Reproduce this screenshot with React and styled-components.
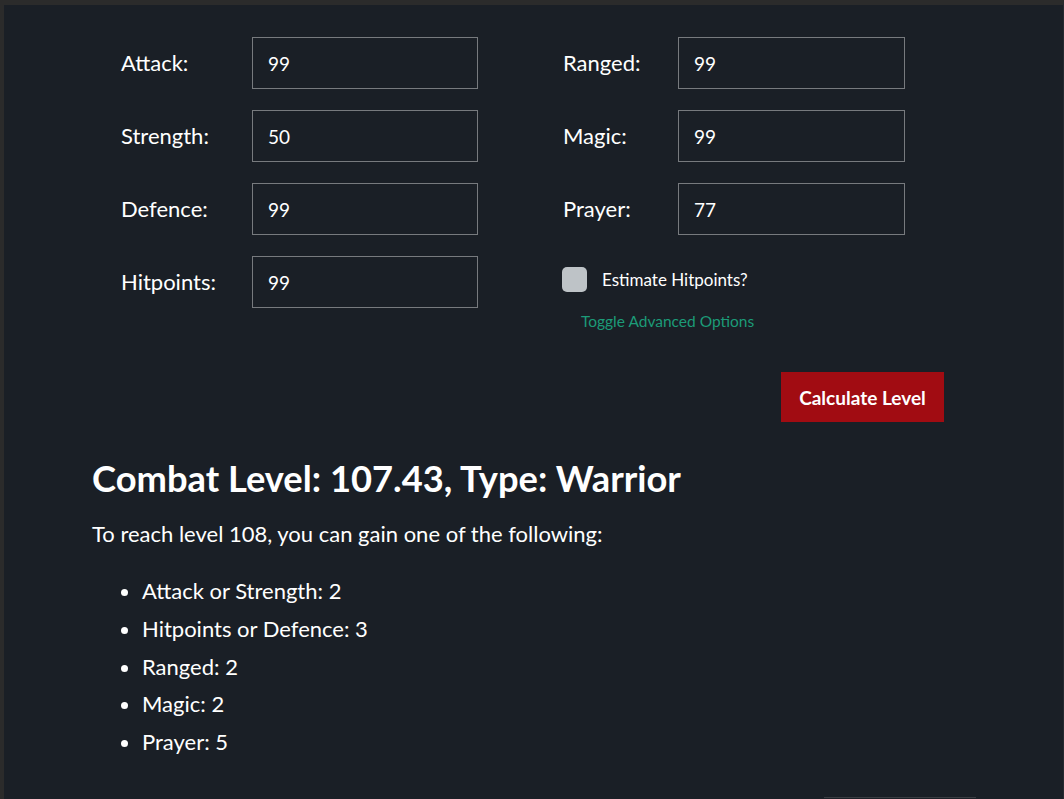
import styled, { createGlobalStyle } from 'styled-components'

const GlobalStyle = createGlobalStyle`
    html, body {
        margin: 0;
        padding: 0;
        background: #1a1f26;
    }
    body {
        font-family: Lato, "Open Sans", sans-serif;
        color: #fff;
    }
`

const leftStats = [
    { label: "Attack:", value: "99" },
    { label: "Strength:", value: "50" },
    { label: "Defence:", value: "99" },
    { label: "Hitpoints:", value: "99" },
]

const rightStats = [
    { label: "Ranged:", value: "99" },
    { label: "Magic:", value: "99" },
    { label: "Prayer:", value: "77" },
]

const gains = [
    "Attack or Strength: 2",
    "Hitpoints or Defence: 3",
    "Ranged: 2",
    "Magic: 2",
    "Prayer: 5",
]

export default function App() {
    return (
        <>
            <GlobalStyle />
            <Frame>
                <Main>
                    <Form onSubmit={(e) => e.preventDefault()}>
                        <Columns>
                            <Column>
                                {leftStats.map((s) => (
                                    <Row key={s.label}>
                                        <Label $width={131}>{s.label}</Label>
                                        <Input defaultValue={s.value} $width={226} />
                                    </Row>
                                ))}
                            </Column>
                            <Column>
                                {rightStats.map((s) => (
                                    <Row key={s.label}>
                                        <Label $width={115}>{s.label}</Label>
                                        <Input defaultValue={s.value} $width={227} />
                                    </Row>
                                ))}
                                <CheckRow>
                                    <Check type="checkbox" />
                                    <CheckText>Estimate Hitpoints?</CheckText>
                                </CheckRow>
                                <Toggle>Toggle Advanced Options</Toggle>
                            </Column>
                        </Columns>
                        <ButtonRow>
                            <Button type="submit">Calculate Level</Button>
                        </ButtonRow>
                    </Form>
                    <Result>
                        <Title>Combat Level: 107.43, Type: Warrior</Title>
                        <Text>To reach level 108, you can gain one of the following:</Text>
                        <List>
                            {gains.map((g) => <Item key={g}>{g}</Item>)}
                        </List>
                    </Result>
                    <Bottom>
                        <Tab />
                    </Bottom>
                </Main>
            </Frame>
        </>
    )
}

const Frame = styled.div`
    height: 799px;
    box-sizing: border-box;
    border-top: 5px solid #2b2b2b;
    border-left: 4px solid #2b2b2b;
    border-right: 1px solid #262a30;
    overflow: hidden;
`
const Main = styled.main`
    padding: 32px 0 0 88px;
`
const Form = styled.form`
    padding-left: 29px;
    width: 823px;
`
const Columns = styled.div`
    display: grid;
    grid-template-columns: 442px 1fr;
`
const Column = styled.div`
    display: flex;
    flex-direction: column;
    gap: 21px;
`
const Row = styled.div`
    display: flex;
    align-items: center;
    height: 52px;
`
const Label = styled.label`
    width: ${(p) => p.$width}px;
    margin-top: -2px;
    font-size: 22px;
    color: #fff;
`
const Input = styled.input`
    width: ${(p) => p.$width}px;
    height: 52px;
    box-sizing: border-box;
    padding: 0 15px;
    background: transparent;
    border: 1px solid #777a7e;
    color: #fff;
    font-family: Lato, sans-serif;
    font-size: 19px;
    outline: none;
`
const CheckRow = styled.div`
    display: flex;
    align-items: center;
    height: 50px;
    margin-top: -2px;
`
const Check = styled.input`
    appearance: none;
    width: 25px;
    height: 25px;
    margin: 0 15px 0 -1px;
    border-radius: 5px;
    background: #bec3c7;
`
const CheckText = styled.span`
    font-size: 17px;
    color: #fff;
`
const Toggle = styled.a`
    margin: -13px 0 0 18px;
    font-size: 15.5px;
    color: #1c9b78;
    cursor: pointer;
`
const ButtonRow = styled.div`
    display: flex;
    justify-content: flex-end;
    margin-top: 42px;
`
const Button = styled.button`
    width: 163px;
    height: 50px;
    border: none;
    background: #a10c12;
    color: #fff;
    font-family: Lato, sans-serif;
    font-size: 19px;
    font-weight: 700;
    cursor: pointer;
`
const Result = styled.section`
    margin-top: 34px;
`
const Title = styled.h2`
    margin: 0 0 20px;
    font-size: 36.3px;
    font-weight: 700;
`
const Text = styled.p`
    margin: 0 0 25px;
    font-size: 22px;
`
const List = styled.ul`
    margin: 0;
    padding-left: 50px;
`
const Item = styled.li`
    font-size: 22px;
    line-height: 37.75px;
`
const Bottom = styled.div`
    display: flex;
    justify-content: flex-end;
    padding-right: 87px;
    margin-top: 36px;
`
const Tab = styled.div`
    width: 152px;
    height: 20px;
    border-top: 1px solid #3a3d42;
    background: #1d2128;
`
